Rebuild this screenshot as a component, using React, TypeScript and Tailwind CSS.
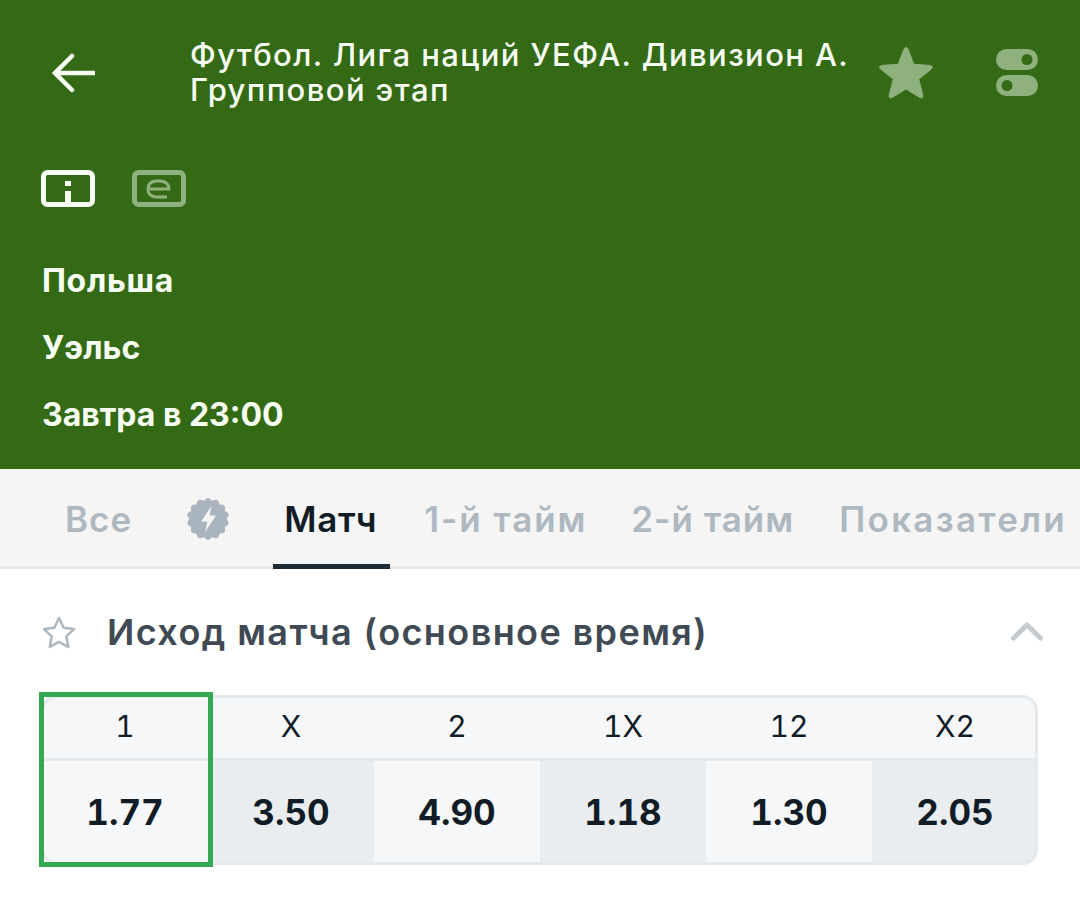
import React from "react";

const font = { fontFamily: '"Inter", "Noto Sans", sans-serif' };

const odds = [
  { label: "1", value: "1.77", dark: false },
  { label: "X", value: "3.50", dark: true },
  { label: "2", value: "4.90", dark: false },
  { label: "1X", value: "1.18", dark: true },
  { label: "12", value: "1.30", dark: false },
  { label: "X2", value: "2.05", dark: true },
];

// scalloped outline for the "hot" tab badge
function scallopPath(cx: number, cy: number, outer: number, inner: number, lobes: number) {
  let d = "";
  for (let i = 0; i < lobes; i++) {
    const a0 = (i / lobes) * Math.PI * 2;
    const a1 = ((i + 0.5) / lobes) * Math.PI * 2;
    const a2 = ((i + 1) / lobes) * Math.PI * 2;
    const p0 = [cx + inner * Math.cos(a0), cy + inner * Math.sin(a0)];
    const c = [cx + outer * 1.05 * Math.cos(a1), cy + outer * 1.05 * Math.sin(a1)];
    const p2 = [cx + inner * Math.cos(a2), cy + inner * Math.sin(a2)];
    if (i === 0) d += `M${p0[0].toFixed(2)} ${p0[1].toFixed(2)}`;
    d += `Q${c[0].toFixed(2)} ${c[1].toFixed(2)} ${p2[0].toFixed(2)} ${p2[1].toFixed(2)}`;
  }
  return d + "Z";
}

function BackIcon() {
  return (
    <svg width="46" height="40" viewBox="0 0 46 40" fill="none" stroke="#f7fdf2" strokeWidth="4.5">
      <path d="M44 20H4" />
      <path d="M21 3L4 20l17 17" strokeLinecap="round" />
    </svg>
  );
}

function StarFilled() {
  return (
    <svg width="56" height="54" viewBox="0 0 56 54" fill="#8fb17d">
      <path
        d="M28 1.5c1 0 1.700.7 2.200 2l5.600 14.800 16.300 1.100c2.400.2 3 2.200 1.200 3.700L40.700 33.100l4.200 16.200c.5 2.200-1.200 3.400-3.100 2.200L28 43l-13.800 8.500c-1.900 1.200-3.600 0-3.100-2.200l4.200-16.200L2.700 23.100c-1.800-1.500-1.200-3.500 1.200-3.700l16.300-1.100 5.600-14.800c.5-1.300 1.200-2 2.200-2z"
        stroke="#8fb17d"
        strokeLinejoin="round"
      />
    </svg>
  );
}

function TogglesIcon() {
  return (
    <svg width="42" height="47" viewBox="0 0 42 47" className="block">
      <rect x="0" y="0" width="42" height="21" rx="10.500" fill="#8fb17d" />
      <circle cx="31" cy="10.500" r="5.500" fill="#346a15" />
      <rect x="0" y="26" width="42" height="21" rx="10.500" fill="#8fb17d" />
      <circle cx="11" cy="36.500" r="5.500" fill="#346a15" />
    </svg>
  );
}

function InfoBadge() {
  return (
    <svg width="54" height="38" viewBox="0 0 54 38" fill="none" className="block">
      <rect x="2.500" y="2.500" width="49" height="32" rx="4" stroke="#f7fdf2" strokeWidth="5" />
      <rect x="24" y="11" width="6" height="5" fill="#f7fdf2" />
      <rect x="24" y="21" width="6" height="14" fill="#f7fdf2" />
    </svg>
  );
}

function EBadge() {
  return (
    <svg width="54" height="38" viewBox="0 0 54 38" fill="none" stroke="#8fb17d" className="block">
      <rect x="2.500" y="2.500" width="49" height="32" rx="4" strokeWidth="5" />
      <path d="M16 19H37C37 14 33 11 28 11H25C19 11 16 14 16 19S19 27 25 27H35" strokeWidth="3" />
    </svg>
  );
}

function BoltBadge() {
  return (
    <svg width="44" height="44" viewBox="0 0 44 44" className="block">
      <path d={scallopPath(22, 22, 23, 18.5, 14)} fill="#a9b4be" />
      <path d="M25.500 9L15 24.500h6.500L19 35l11-16.500h-6.500z" fill="#f5f5f5" />
    </svg>
  );
}

export default function App() {
  return (
    <div className="w-[1080px] h-[900px] overflow-hidden bg-white" style={font}>
      {/* Match header */}
      <div className="h-[469px] bg-[#346a15] text-[#f7fdf2] flex flex-col">
        <div className="flex items-start h-[141px]">
          <div className="w-[190px] pl-[51px] pt-[53px] shrink-0">
            <BackIcon />
          </div>
          <div className="w-[680px] pt-[37px] text-[31px] leading-[35px] font-medium tracking-[1.4px] shrink-0">
            Футбол. Лига наций УЕФА. Дивизион А.
            <br />
            Групповой этап
          </div>
          <div className="pt-[46px] ml-[8px] shrink-0">
            <StarFilled />
          </div>
          <div className="pt-[49px] ml-[62px] shrink-0">
            <TogglesIcon />
          </div>
        </div>
        <div className="flex gap-[37px] pl-[41px] pt-[29px]">
          <InfoBadge />
          <EBadge />
        </div>
        <div className="pl-[42px] pt-[54px] flex flex-col gap-[30px] text-[32px] leading-[37px] font-bold">
          <div className="tracking-[0.7px]">Польша</div>
          <div className="tracking-[0.1px]">Уэльс</div>
          <div className="tracking-[0px]">Завтра в 23:00</div>
        </div>
      </div>

      {/* Tabs */}
      <div className="h-[100px] bg-[#f5f5f5] shadow-[inset_0_-3px_0_#e8e8e8] flex items-center pl-[65px] text-[35px] font-semibold text-[#aeb8c1] whitespace-nowrap overflow-hidden">
        <span className="tracking-[1px]">Все</span>
        <span className="ml-[54px] shrink-0">
          <BoltBadge />
        </span>
        <span className="relative ml-[54px] self-stretch flex items-center text-[#101c26] tracking-[0.75px]">
          Матч
          <span className="absolute left-[-11px] right-[-13px] bottom-0 h-[5px] bg-[#1d2b36]" />
        </span>
        <span className="ml-[47px] tracking-[1.9px]">1-й тайм</span>
        <span className="ml-[44px] tracking-[1px]">2-й тайм</span>
        <span className="ml-[45px] tracking-[2.3px]">Показатели матча</span>
      </div>

      {/* Market */}
      <div className="px-[41px]">
        <div className="flex items-center h-[126px]">
          <svg width="36" height="34" viewBox="0 0 36 34" fill="none" stroke="#aeb8c1" strokeWidth="2.500" className="shrink-0">
            <path d="M18 3l4.600 9.800 10.400 1.300-7.700 7.300 2 10.600L18 26.800 8.700 32l2-10.600L3 14.100l10.400-1.300z" strokeLinejoin="round" />
          </svg>
          <div className="ml-[30px] text-[36px] font-semibold text-[#3f4a54] tracking-[1.4px] whitespace-nowrap">Исход матча (основное время)</div>
          <svg width="32" height="19" viewBox="0 0 32 19" fill="none" stroke="#c5cacf" strokeWidth="5" strokeLinecap="round" strokeLinejoin="round" className="ml-auto mb-[2px] mr-[-4px]">
            <path d="M2.500 16L16 3l13.500 13" />
          </svg>
        </div>

        <div className="relative w-[997px] h-[170px]">
          <div className="grid grid-cols-6 w-[996px] ml-[1px] h-full rounded-[16px] overflow-hidden bg-[#f5f7f9]">
            {odds.map((o) => (
              <div key={o.label} className="flex flex-col">
                <div className="h-[66px] border-b-[3px] border-[#e6e9eb] flex items-center justify-center text-[30px] text-[#101c26] tabular-nums">
                  {o.label}
                </div>
                <div
                  className={`flex-1 flex items-center justify-center pb-[2px] text-[35px] font-bold text-[#101c26] tabular-nums ${o.dark ? "bg-[#e9edf0]" : ""}`}
                >
                  {o.value}
                </div>
              </div>
            ))}
          </div>
          {/* table outline sits over the cells */}
          <div className="absolute inset-0 border-[3px] border-[#e6e9eb] rounded-[16px] pointer-events-none" />
          {/* selected outcome */}
          <div className="absolute left-[-2px] top-[-3px] w-[174px] h-[175px] border-[5px] border-[#34a853]" />
        </div>
      </div>
    </div>
  );
}
